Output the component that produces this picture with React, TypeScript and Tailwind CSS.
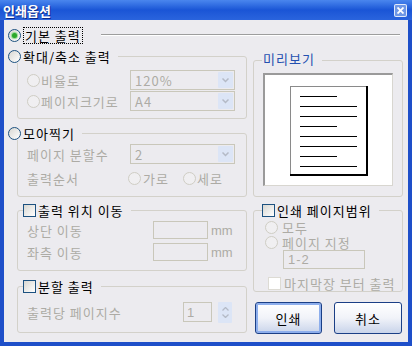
import React from "react";

const FONT = "font-['Noto_Sans_CJK_KR','Noto_Sans_CJK_SC',sans-serif]";
const DIM = "text-[#ADABA5]";
const FACE = "bg-[#ECEBEF]";

function Radio({ checked = false, disabled = false }: { checked?: boolean; disabled?: boolean }) {
  return (
    <span
      className={`flex h-[13px] w-[13px] shrink-0 items-center justify-center rounded-full border ${
        disabled ? "border-[#CFCDC4] bg-[#F0EFF1]" : "border-[#1C5180] bg-gradient-to-br from-[#D8D7D2] to-white"
      }`}
    >
      {checked && <span className="h-[5px] w-[5px] rounded-full bg-[#2BA82B] shadow-[0_0_1px_1px_#8ED88E]" />}
    </span>
  );
}

function Checkbox({ disabled = false }: { disabled?: boolean }) {
  return (
    <span
      className={`block h-[13px] w-[13px] shrink-0 border ${
        disabled ? "border-[#DDDBD4] bg-white" : "border-[#1C5180] bg-gradient-to-br from-[#D8D7D2] to-white"
      }`}
    />
  );
}

function Select({ value }: { value: string }) {
  return (
    <div className="flex h-[20px] w-[105px] items-center justify-between border border-[#C9C7BA] pl-[4px] pr-[1px]">
      <span className={DIM}>{value}</span>
      <span className="flex h-[16px] w-[15px] items-center justify-center rounded-[1px] bg-[#DCE5F6]">
        <svg width="7" height="5" viewBox="0 0 7 5">
          <path d="M0.5 0.5 L3.5 3.5 L6.5 0.5" stroke="#B4BAC6" strokeWidth="1.5" fill="none" />
        </svg>
      </span>
    </div>
  );
}

function GroupBox({
  header,
  headerClass = "",
  boxClass = "",
  overlap = "-mt-[7px]",
  children,
}: {
  header: React.ReactNode;
  headerClass?: string;
  boxClass?: string;
  overlap?: string;
  children: React.ReactNode;
}) {
  return (
    <div className="flex flex-col">
      <div className={`relative z-10 flex h-[14px] items-center ${headerClass}`}>
        <div className={`flex h-full items-center gap-[2px] pr-[7px] ${FACE}`}>{header}</div>
      </div>
      <div className={`${overlap} rounded-[3px] border border-[#D3D1CA] ${boxClass}`}>{children}</div>
    </div>
  );
}

function Button({ label, primary = false }: { label: string; primary?: boolean }) {
  return (
    <div
      className={`flex h-[32px] items-center justify-center rounded-[3px] border border-[#1B3F86] bg-gradient-to-b from-white via-[#F1F3F9] to-[#C9D4EA] ${
        primary ? "w-[67px] shadow-[inset_0_0_0_2px_#8DAEEC]" : "w-[68px]"
      }`}
    >
      {label}
    </div>
  );
}

function PagePreview() {
  const lines = [37, 57, 57, 37, 57, 57, 37, 57];
  return (
    <svg width="78" height="90" viewBox="0 0 78 90">
      <rect x="0" y="0" width="78" height="90" fill="black" />
      <rect x="0" y="0" width="76" height="88" fill="#8A8A8A" />
      <rect x="1" y="1" width="75" height="87" fill="white" />
      {lines.map((w, i) => (
        <line key={i} x1="10" x2={10 + w} y1={10.5 + i * 10} y2={10.5 + i * 10} stroke="black" strokeWidth="1" />
      ))}
    </svg>
  );
}

export default function App() {
  return (
    <div className={`flex h-[346px] w-[412px] flex-col text-[13px] leading-none tracking-[1px] text-black ${FONT}`}>
      {/* Title bar */}
      <div className="flex h-[20px] items-center justify-between bg-gradient-to-b from-[#4A86EE] via-[#1A55D6] to-[#2A64DD] pl-[3px] pr-[5px]">
        <span className="text-[13px] font-bold tracking-normal text-white [text-shadow:1px_1px_0_#0F2A8A]">인쇄옵션</span>
        <span className="flex h-[13px] w-[13px] items-center justify-center rounded-[2px] border border-white/80 bg-[#6E97E6]">
          <svg width="7" height="7" viewBox="0 0 7 7">
            <path d="M0.5 0.5 L6.5 6.5 M6.5 0.5 L0.5 6.5" stroke="white" strokeWidth="1.8" />
          </svg>
        </span>
      </div>

      {/* Body */}
      <div className={`flex flex-1 flex-col border-x-4 border-b-4 border-[#1E4FC9] pt-[8px] ${FACE}`}>
        <div className="flex h-[14px] items-center pl-[4px]">
          <Radio checked />
          <span className="ml-[2px] border border-dotted border-black px-[1px] py-[1px]">기본 출력</span>
          <div className="ml-[18px] mr-[8px] h-[2px] flex-1 border-y border-t-[#9D9D9D] border-b-white" />
        </div>

        <div className="mt-[7px] flex gap-[6px] pl-[4px]">
          {/* Left column */}
          <div className="flex w-[239px] flex-col">
            <GroupBox
              header={
                <>
                  <Radio />
                  <span>확대/축소 출력</span>
                </>
              }
              boxClass="ml-[9px] flex flex-col gap-[1px] pt-[13px] pb-[7px] pl-[9px] pr-[11px]"
            >
              <div className="flex h-[20px] items-center justify-between">
                <div className="flex items-center gap-[1px]">
                  <Radio disabled />
                  <span className={DIM}>비율로</span>
                </div>
                <Select value="120%" />
              </div>
              <div className="flex h-[20px] items-center justify-between">
                <div className="flex items-center gap-[1px]">
                  <Radio disabled />
                  <span className={DIM}>페이지크기로</span>
                </div>
                <Select value="A4" />
              </div>
            </GroupBox>

            <div className="mt-[7px]">
              <GroupBox
                header={
                  <>
                    <Radio />
                    <span>모아찍기</span>
                  </>
                }
                boxClass="ml-[9px] flex flex-col pt-[10px] pb-[10px] pl-[9px] pr-[11px]"
              >
                <div className="flex h-[20px] items-center justify-between">
                  <span className={DIM}>페이지 분할수</span>
                  <Select value="2" />
                </div>
                <div className="mt-[6px] flex h-[16px] items-center">
                  <span className={`w-[101px] ${DIM}`}>출력순서</span>
                  <div className="flex w-[55px] items-center gap-[2px]">
                    <Radio disabled />
                    <span className={DIM}>가로</span>
                  </div>
                  <div className="flex items-center gap-[1px]">
                    <Radio disabled />
                    <span className={DIM}>세로</span>
                  </div>
                </div>
              </GroupBox>
            </div>

            <div className="mt-[6px]">
              <GroupBox
                headerClass="pl-[15px]"
                header={
                  <>
                    <Checkbox />
                    <span>출력 위치 이동</span>
                  </>
                }
                boxClass="ml-[9px] flex flex-col gap-[4px] pt-[10px] pb-[9px] pl-[9px]"
              >
                {["상단 이동", "좌측 이동"].map((t) => (
                  <div key={t} className="flex h-[18px] items-center">
                    <span className={`w-[126px] ${DIM}`}>{t}</span>
                    <span className="h-[18px] w-[55px] border border-[#C9C7BA]" />
                    <span className={`ml-[3px] font-['Liberation_Sans',sans-serif] tracking-normal ${DIM}`}>mm</span>
                  </div>
                ))}
              </GroupBox>
            </div>

            <div className="mt-[8px]">
              <GroupBox
                headerClass="pl-[15px]"
                header={
                  <>
                    <Checkbox />
                    <span>분할 출력</span>
                  </>
                }
                boxClass="ml-[9px] pt-[15px] pb-[10px] pl-[9px]"
              >
                <div className="flex h-[20px] items-center">
                  <span className={`w-[156px] ${DIM}`}>출력당 페이지수</span>
                  <span className={`flex h-[20px] w-[29px] items-center border border-[#C9C7BA] pl-[3px] font-['Liberation_Sans',sans-serif] ${DIM}`}>
                    1
                  </span>
                  <span className="ml-[6px] flex h-[21px] w-[14px] flex-col items-center justify-center gap-[3px] rounded-[1px] bg-[#DCE5F6]">
                    <svg width="7" height="4" viewBox="0 0 7 4">
                      <path d="M0.5 3.5 L3.5 0.5 L6.5 3.5" stroke="#B4BAC6" strokeWidth="1.3" fill="none" />
                    </svg>
                    <svg width="7" height="4" viewBox="0 0 7 4">
                      <path d="M0.5 0.5 L3.5 3.5 L6.5 0.5" stroke="#B4BAC6" strokeWidth="1.3" fill="none" />
                    </svg>
                  </span>
                </div>
              </GroupBox>
            </div>
          </div>

          {/* Right column */}
          <div className="flex w-[150px] flex-col">
            <div className="pt-[2px]">
              <GroupBox
                headerClass="pl-[9px]"
                overlap="-mt-[5px]"
                header={<span className="pl-[1px] text-[#2450B0]">미리보기</span>}
                boxClass="pt-[12px] pb-[10px] pl-[9px]"
              >
                <div className="flex h-[113px] w-[130px] items-center justify-center border-t-2 border-l-2 border-r border-b border-t-[#9A9A9A] border-l-[#9A9A9A] border-r-[#D8D6D0] border-b-[#D8D6D0] bg-white pt-[2px]">
                  <PagePreview />
                </div>
              </GroupBox>
            </div>

            <div className="mt-[6px]">
              <GroupBox
                headerClass="pl-[9px]"
                header={
                  <>
                    <Checkbox />
                    <span>인쇄 페이지범위</span>
                  </>
                }
                boxClass="flex flex-col pt-[8px] pb-[1px]"
              >
                <div className="flex h-[16px] items-center gap-[4px] pl-[11px]">
                  <Radio disabled />
                  <span className={DIM}>모두</span>
                </div>
                <div className="flex h-[15px] items-center gap-[4px] pl-[11px]">
                  <Radio disabled />
                  <span className={DIM}>페이지 지정</span>
                </div>
                <span className={`ml-[29px] flex h-[19px] w-[82px] items-center border border-[#C9C7BA] pl-[4px] font-['Liberation_Sans',sans-serif] ${DIM}`}>
                  1-2
                </span>
                <div className="mt-[7px] flex h-[14px] items-center gap-[3px] pl-[14px]">
                  <Checkbox disabled />
                  <span className={DIM}>마지막장 부터 출력</span>
                </div>
              </GroupBox>
            </div>

            <div className="mt-[10px] flex gap-[12px] pl-[2px]">
              <Button label="인쇄" primary />
              <Button label="취소" />
            </div>
          </div>
        </div>
      </div>
    </div>
  );
}
